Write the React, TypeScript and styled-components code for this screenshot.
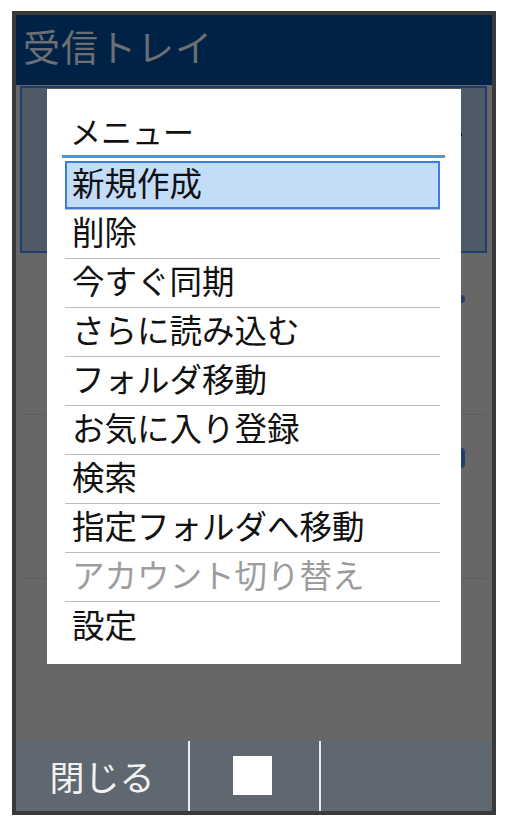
import React from "react";
import styled, { createGlobalStyle } from "styled-components";

const Global = createGlobalStyle`
  html, body { margin: 0; padding: 0; background: #ffffff; }
  body { font-family: "Noto Sans CJK JP", "Noto Sans", sans-serif; }
  * { box-sizing: border-box; }
`;

const Page = styled.div`
  width: 507px;
  height: 826px;
  padding: 11px 0 0 12px;
`;

const Phone = styled.div`
  width: 484px;
  height: 804px;
  border: 4px solid #3a3a3a;
  display: flex;
  flex-direction: column;
  background: #676767;
`;

const Header = styled.header`
  height: 70px;
  background: #012247;
  display: flex;
  align-items: center;
  padding-left: 7px;
  flex-shrink: 0;
`;

const HeaderTitle = styled.h1`
  margin: 0;
  font-size: 37px;
  font-weight: 400;
  color: #6b6e72;
  letter-spacing: 1px;
  line-height: 1;
  padding-bottom: 7px;
`;

const Body = styled.main`
  position: relative;
  flex: 1;
  display: flex;
  flex-direction: column;
  padding: 1px 5px 0 4px;
`;

const BgRow = styled.div<{ $h: number; $selected?: boolean }>`
  height: ${(p) => p.$h}px;
  flex-shrink: 0;
  display: flex;
  justify-content: flex-end;
  align-items: flex-start;
  background: ${(p) => (p.$selected ? "#4e5a66" : "transparent")};
  border: ${(p) => (p.$selected ? "2px solid #1d3e6c" : "none")};
  border-bottom: ${(p) => (p.$selected ? "2px solid #1d3e6c" : "1px solid #5e5e5e")};
`;

const BgDot = styled.span`
  width: 3px;
  height: 3px;
  margin: 45px 23px 0 0;
  background: #111;
`;

const BgBadge = styled.span<{ $top: number; $h: number }>`
  width: 30px;
  height: ${(p) => p.$h}px;
  margin: ${(p) => p.$top}px 22px 0 0;
  border-radius: 4px;
  background: #1f3f70;
`;

const Dialog = styled.section`
  position: absolute;
  left: 31px;
  top: 4px;
  width: 414px;
  height: 575px;
  background: #ffffff;
  display: flex;
  flex-direction: column;
  padding: 0 16px 0 15px;
`;

const DialogTitle = styled.h2`
  margin: 0;
  height: 66px;
  padding: 24px 0 0 8px;
  font-size: 31px;
  line-height: 36px;
  font-weight: 400;
  color: #111;
`;

const TitleRule = styled.div`
  height: 3px;
  background: #3b9ae9;
  margin-bottom: 3px;
`;

const MenuList = styled.ul`
  list-style: none;
  margin: 0 5px 0 3px;
  padding: 0;
`;

const MenuItem = styled.li<{ $selected?: boolean; $disabled?: boolean }>`
  height: 49px;
  display: flex;
  align-items: center;
  padding: 0 0 5px 7px;
  font-size: 32.5px;
  line-height: 1;
  white-space: nowrap;
  color: ${(p) => (p.$disabled ? "#9c9c9c" : "#111111")};
  border-bottom: 1px solid #bcbcbc;
  background: ${(p) => (p.$selected ? "#c3ddf9" : "transparent")};
  box-shadow: ${(p) => (p.$selected ? "inset 0 0 0 2px #3a80da, inset 0 -1px 0 #ffffff" : "none")};
  &:last-child {
    border-bottom: none;
  }
`;

const Footer = styled.footer`
  height: 70px;
  flex-shrink: 0;
  background: #5f6870;
  display: flex;
`;

const FooterCell = styled.div<{ $w?: number }>`
  width: ${(p) => (p.$w ? `${p.$w}px` : "auto")};
  flex: ${(p) => (p.$w ? "0 0 auto" : "1")};
  display: flex;
  align-items: center;
  justify-content: center;
  font-size: 35px;
  color: #f2f2f2;
  padding-bottom: 2px;
`;

const FooterDivider = styled.div`
  width: 2px;
  background: #e9ecee;
`;

const StopSquare = styled.span`
  width: 39px;
  height: 39px;
  background: #ffffff;
  margin-left: -4px;
`;

const items: { label: string; selected?: boolean; disabled?: boolean }[] = [
  { label: "新規作成", selected: true },
  { label: "削除" },
  { label: "今すぐ同期" },
  { label: "さらに読み込む" },
  { label: "フォルダ移動" },
  { label: "お気に入り登録" },
  { label: "検索" },
  { label: "指定フォルダへ移動" },
  { label: "アカウント切り替え", disabled: true },
  { label: "設定" },
];

export default function App() {
  return (
    <>
      <Global />
      <Page>
        <Phone>
          <Header>
            <HeaderTitle>受信トレイ</HeaderTitle>
          </Header>
          <Body>
            <BgRow $h={167} $selected>
              <BgDot />
            </BgRow>
            <BgRow $h={162}>
              <BgBadge $top={42} $h={8} />
            </BgRow>
            <BgRow $h={164}>
              <BgBadge $top={33} $h={20} />
            </BgRow>
            <Dialog>
              <DialogTitle>メニュー</DialogTitle>
              <TitleRule />
              <MenuList>
                {items.map((it) => (
                  <MenuItem key={it.label} $selected={it.selected} $disabled={it.disabled}>
                    {it.label}
                  </MenuItem>
                ))}
              </MenuList>
            </Dialog>
          </Body>
          <Footer>
            <FooterCell $w={172}>閉じる</FooterCell>
            <FooterDivider />
            <FooterCell $w={129}>
              <StopSquare />
            </FooterCell>
            <FooterDivider />
            <FooterCell />
          </Footer>
        </Phone>
      </Page>
    </>
  );
}
